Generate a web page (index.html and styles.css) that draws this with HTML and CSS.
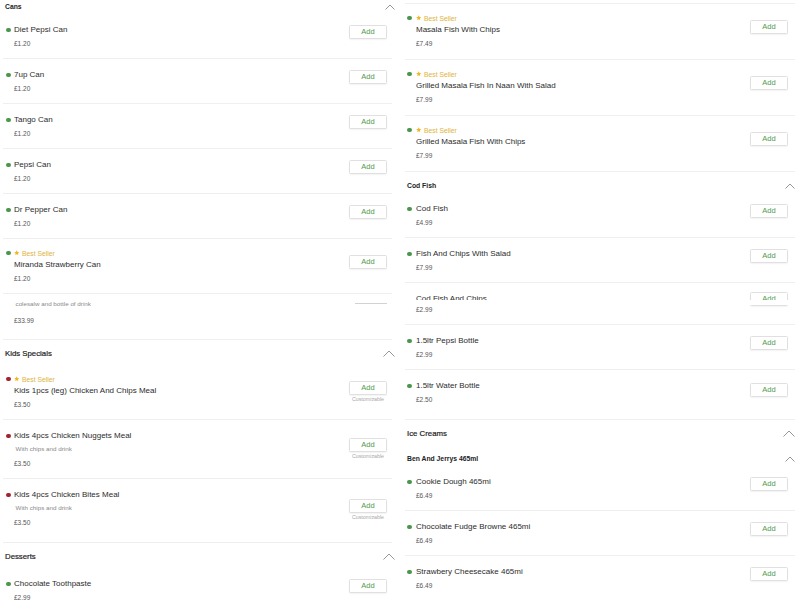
FILE: index.html
```html
<!DOCTYPE html>
<html lang="en">
<head>
<meta charset="utf-8">
<title>Menu</title>
<link rel="stylesheet" href="styles.css">
</head>
<body>
<div class="menu">
  <div class="col col-left">
    <div class="sub"><span>Cans</span><svg class="chev-s" viewBox="0 0 10 6"><path d="M0.5 5.5L5 1l4.5 4.5"/></svg></div>

    <div class="item">
      <div class="info"><div class="line"><span class="dot"></span><span class="name">Diet Pepsi Can</span></div><div class="price">£1.20</div></div>
      <div class="act"><div class="btn">Add</div><div class="cust"></div></div>
    </div>
    <div class="item">
      <div class="info"><div class="line"><span class="dot"></span><span class="name">7up Can</span></div><div class="price">£1.20</div></div>
      <div class="act"><div class="btn">Add</div><div class="cust"></div></div>
    </div>
    <div class="item">
      <div class="info"><div class="line"><span class="dot"></span><span class="name">Tango Can</span></div><div class="price">£1.20</div></div>
      <div class="act"><div class="btn">Add</div><div class="cust"></div></div>
    </div>
    <div class="item">
      <div class="info"><div class="line"><span class="dot"></span><span class="name">Pepsi Can</span></div><div class="price">£1.20</div></div>
      <div class="act"><div class="btn">Add</div><div class="cust"></div></div>
    </div>
    <div class="item">
      <div class="info"><div class="line"><span class="dot"></span><span class="name">Dr Pepper Can</span></div><div class="price">£1.20</div></div>
      <div class="act"><div class="btn">Add</div><div class="cust"></div></div>
    </div>
    <div class="item">
      <div class="info badged">
        <div class="line badge"><span class="dot"></span><svg class="star" viewBox="0 0 10 10"><path d="M5 .5l1.4 3 3.2.3-2.4 2.2.7 3.2L5 7.6 2.1 9.2l.7-3.2L.4 3.8l3.2-.3z"/></svg><span>Best Seller</span></div>
        <div class="line"><span class="name">Miranda Strawberry Can</span></div>
        <div class="price">£1.20</div>
      </div>
      <div class="act"><div class="btn">Add</div><div class="cust"></div></div>
    </div>
    <div class="item">
      <div class="info ghost-info">
        <div class="desc">colesalw and bottle of drink</div>
        <div class="price">£33.99</div>
      </div>
      <div class="act ghosted"><div class="ghost"></div></div>
    </div>

    <div class="sec"><span>Kids Specials</span><svg class="chev-l" viewBox="0 0 12 7"><path d="M0.5 6.5L6 1l5.5 5.5"/></svg></div>

    <div class="item">
      <div class="info badged">
        <div class="line badge"><span class="dot red"></span><svg class="star" viewBox="0 0 10 10"><path d="M5 .5l1.4 3 3.2.3-2.4 2.2.7 3.2L5 7.6 2.1 9.2l.7-3.2L.4 3.8l3.2-.3z"/></svg><span>Best Seller</span></div>
        <div class="line"><span class="name">Kids 1pcs (leg) Chicken And Chips Meal</span></div>
        <div class="price">£3.50</div>
      </div>
      <div class="act"><div class="btn">Add</div><div class="cust">Customizable</div></div>
    </div>
    <div class="item">
      <div class="info">
        <div class="line"><span class="dot red"></span><span class="name">Kids 4pcs Chicken Nuggets Meal</span></div>
        <div class="desc">With chips and drink</div>
        <div class="price after-desc">£3.50</div>
      </div>
      <div class="act"><div class="btn">Add</div><div class="cust">Customizable</div></div>
    </div>
    <div class="item last">
      <div class="info">
        <div class="line"><span class="dot red"></span><span class="name">Kids 4pcs Chicken Bites Meal</span></div>
        <div class="desc">With chips and drink</div>
        <div class="price after-desc">£3.50</div>
      </div>
      <div class="act"><div class="btn">Add</div><div class="cust">Customizable</div></div>
    </div>

    <div class="sec"><span>Desserts</span><svg class="chev-l" viewBox="0 0 12 7"><path d="M0.5 6.5L6 1l5.5 5.5"/></svg></div>

    <div class="item">
      <div class="info"><div class="line"><span class="dot"></span><span class="name">Chocolate Toothpaste</span></div><div class="price">£2.99</div></div>
      <div class="act"><div class="btn">Add</div><div class="cust"></div></div>
    </div>
  </div>

  <div class="col col-right">
    <div class="spacer"></div>
    <div class="item">
      <div class="info badged">
        <div class="line badge"><span class="dot"></span><svg class="star" viewBox="0 0 10 10"><path d="M5 .5l1.4 3 3.2.3-2.4 2.2.7 3.2L5 7.6 2.1 9.2l.7-3.2L.4 3.8l3.2-.3z"/></svg><span>Best Seller</span></div>
        <div class="line"><span class="name">Masala Fish With Chips</span></div>
        <div class="price">£7.49</div>
      </div>
      <div class="act"><div class="btn">Add</div><div class="cust"></div></div>
    </div>
    <div class="item">
      <div class="info badged">
        <div class="line badge"><span class="dot"></span><svg class="star" viewBox="0 0 10 10"><path d="M5 .5l1.4 3 3.2.3-2.4 2.2.7 3.2L5 7.6 2.1 9.2l.7-3.2L.4 3.8l3.2-.3z"/></svg><span>Best Seller</span></div>
        <div class="line"><span class="name">Grilled Masala Fish In Naan With Salad</span></div>
        <div class="price">£7.99</div>
      </div>
      <div class="act"><div class="btn">Add</div><div class="cust"></div></div>
    </div>
    <div class="item">
      <div class="info badged">
        <div class="line badge"><span class="dot"></span><svg class="star" viewBox="0 0 10 10"><path d="M5 .5l1.4 3 3.2.3-2.4 2.2.7 3.2L5 7.6 2.1 9.2l.7-3.2L.4 3.8l3.2-.3z"/></svg><span>Best Seller</span></div>
        <div class="line"><span class="name">Grilled Masala Fish With Chips</span></div>
        <div class="price">£7.99</div>
      </div>
      <div class="act"><div class="btn">Add</div><div class="cust"></div></div>
    </div>

    <div class="sub"><span>Cod Fish</span><svg class="chev-s" viewBox="0 0 10 6"><path d="M0.5 5.5L5 1l4.5 4.5"/></svg></div>

    <div class="item">
      <div class="info"><div class="line"><span class="dot"></span><span class="name">Cod Fish</span></div><div class="price">£4.99</div></div>
      <div class="act"><div class="btn">Add</div><div class="cust"></div></div>
    </div>
    <div class="item">
      <div class="info"><div class="line"><span class="dot"></span><span class="name">Fish And Chips With Salad</span></div><div class="price">£7.99</div></div>
      <div class="act"><div class="btn">Add</div><div class="cust"></div></div>
    </div>
    <div class="item">
      <div class="info"><div class="clip"><div class="line"><span class="dot"></span><span class="name">Cod Fish And Chips</span></div></div><div class="price after-clip">£2.99</div></div>
      <div class="act"><div class="btn cut">Add</div><div class="cust"></div></div>
    </div>
    <div class="item">
      <div class="info"><div class="line"><span class="dot"></span><span class="name">1.5ltr Pepsi Bottle</span></div><div class="price">£2.99</div></div>
      <div class="act"><div class="btn">Add</div><div class="cust"></div></div>
    </div>
    <div class="item last">
      <div class="info"><div class="line"><span class="dot"></span><span class="name">1.5ltr Water Bottle</span></div><div class="price">£2.50</div></div>
      <div class="act"><div class="btn">Add</div><div class="cust"></div></div>
    </div>

    <div class="sec"><span>Ice Creams</span><svg class="chev-l" viewBox="0 0 12 7"><path d="M0.5 6.5L6 1l5.5 5.5"/></svg></div>
    <div class="sub"><span>Ben And Jerrys 465ml</span><svg class="chev-s" viewBox="0 0 10 6"><path d="M0.5 5.5L5 1l4.5 4.5"/></svg></div>

    <div class="item">
      <div class="info"><div class="line"><span class="dot"></span><span class="name">Cookie Dough 465mi</span></div><div class="price">£6.49</div></div>
      <div class="act"><div class="btn">Add</div><div class="cust"></div></div>
    </div>
    <div class="item">
      <div class="info"><div class="line"><span class="dot"></span><span class="name">Chocolate Fudge Browne 465mi</span></div><div class="price">£6.49</div></div>
      <div class="act"><div class="btn">Add</div><div class="cust"></div></div>
    </div>
    <div class="item">
      <div class="info"><div class="line"><span class="dot"></span><span class="name">Strawbery Cheesecake 465mi</span></div><div class="price">£6.49</div></div>
      <div class="act"><div class="btn">Add</div><div class="cust"></div></div>
    </div>
  </div>
</div>
</body>
</html>
```

FILE: styles.css
```css
* { box-sizing: border-box; margin: 0; padding: 0; }
html, body { background: #fff; }
body {
  font-family: "Liberation Sans", Arial, sans-serif;
  color: #333;
  width: 800px;
  height: 600px;
  overflow: hidden;
}
.menu {
  display: grid;
  grid-template-columns: 398px 398px;
  column-gap: 4px;
  height: 600px;
  overflow: hidden;
  align-items: start;
}
.col { display: flex; flex-direction: column; }
.col-left { padding: 0 3px; margin-top: -7px; }
.col-right { padding: 0 5px 0 3px; }

.spacer { height: 4px; border-bottom: 1px solid #efefef; }

/* headers */
.sub, .sec {
  display: flex;
  justify-content: space-between;
  align-items: center;
  padding-left: 2px;
  color: #222;
  white-space: nowrap;
}
.sub {
  padding-top: 10px;
  padding-bottom: 3px;
  font-size: 6.8px;
  line-height: 8px;
  font-weight: bold;
}
.sec {
  padding-top: 9px;
  padding-bottom: 7px;
  font-size: 7.8px;
  line-height: 9px;
  -webkit-text-stroke: 0.2px #222;
}
.chev-s { width: 10px; height: 6px; flex: none; }
.chev-l { width: 12px; height: 7px; flex: none; }
.chev-s path, .chev-l path { fill: none; stroke: #8a8a8a; stroke-width: 0.9; }

/* items */
.item {
  display: flex;
  align-items: center;
  border-bottom: 1px solid #efefef;
  padding-right: 5px;
}
.col-left .item { margin-right: 3px; }
.col-right .item { padding-right: 7px; }

.info {
  flex: 1;
  min-width: 0;
  padding: 11px 0 10px 11px;
}
.info.badged { padding-top: 9px; }
.col-right .info.badged { padding-bottom: 11px; }
.item.last .info { padding-bottom: 15px; }
.info.ghost-info { padding-top: 6px; padding-bottom: 14px; }

.line {
  display: flex;
  align-items: center;
  height: 10px;
  white-space: nowrap;
}
.name { font-size: 8px; line-height: 10px; color: #2c2c2c; }
.dot {
  flex: none;
  width: 4.5px;
  height: 4.5px;
  border-radius: 50%;
  background: #4a964b;
  margin-left: -8px;
  margin-right: 3.5px;
}
.col-right .dot { margin-left: -9px; margin-right: 4.5px; }
.dot.red { background: #a3222e; }

.badge {
  font-size: 6.8px;
  color: #e0b43c;
  margin-bottom: 2px;
}
.star { width: 5.5px; height: 5.5px; margin-right: 2.5px; flex: none; }
.star path { fill: #f0b41e; }

.desc {
  font-size: 6.25px;
  line-height: 8px;
  color: #8a8a8a;
  margin-top: 4px;
  padding-left: 1.5px;
  white-space: nowrap;
}
.ghost-info .desc { margin-top: 0; }

.price {
  font-size: 6.5px;
  line-height: 8px;
  color: #555;
  margin-top: 5px;
}
.price.after-desc { margin-top: 7px; }
.ghost-info .price { margin-top: 9px; }
.clip { height: 5.5px; overflow: hidden; }
.price.after-clip { margin-top: 6.5px; }

/* actions */
.act {
  flex: none;
  width: 38px;
  display: flex;
  flex-direction: column;
  align-items: center;
}
.btn {
  width: 38px;
  height: 14px;
  border: 1px solid #e0e0e0;
  border-radius: 1.5px;
  background: #fff;
  font-size: 7.5px;
  line-height: 12px;
  color: #4e9b4e;
  text-align: center;
  box-shadow: 0 1px 1.5px rgba(0, 0, 0, 0.05);
}
.btn.cut { position: relative; }
.btn.cut::after {
  content: "";
  position: absolute;
  left: -2px;
  right: -2px;
  top: 6.5px;
  height: 5.5px;
  background: #fff;
}
.cust {
  height: 9px;
  font-size: 5.3px;
  line-height: 9px;
  color: #a8a8a8;
  white-space: nowrap;
}
.act.ghosted {
  align-self: flex-start;
  align-items: flex-end;
  margin-top: 8.5px;
}
.ghost { width: 32px; height: 1px; background: #d2d2d2; }
```
